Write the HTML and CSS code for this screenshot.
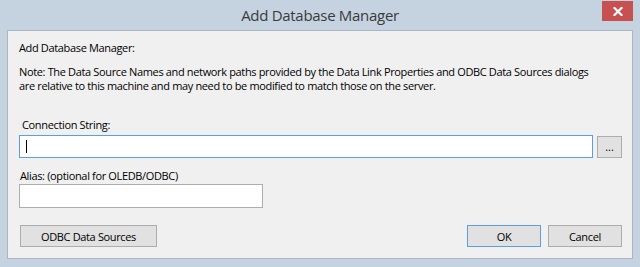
FILE: index.html
```html
<!DOCTYPE html>
<html>
<head>
<meta charset="utf-8">
<link rel="stylesheet" href="styles.css">
</head>
<body>
<div class="window">
  <div class="titlebar">
    <div class="tb-side"></div>
    <div class="title">Add Database Manager</div>
    <div class="tb-side tb-right">
      <div class="close">
        <svg width="10" height="9" viewBox="0 0 10 9"><path d="M1.5 1 L8.5 8 M8.5 1 L1.5 8" stroke="#fff" stroke-width="2.2" stroke-linecap="square"/></svg>
      </div>
    </div>
  </div>
  <div class="panel">
    <div class="heading">Add Database Manager:</div>
    <div class="note">Note: The Data Source Names and network paths provided by the Data Link Properties and ODBC Data Sources dialogs<br>are relative to this machine and may need to be modified to match those on the server.</div>
    <div class="label conn-label">Connection String:</div>
    <div class="conn-row">
      <div class="textbox focused"><span class="caret"></span></div>
      <div class="btn dots">...</div>
    </div>
    <div class="label alias-label">Alias: (optional for OLEDB/ODBC)</div>
    <div class="textbox alias"></div>
    <div class="btn-row">
      <div class="btn odbc">ODBC Data Sources</div>
      <div class="spacer"></div>
      <div class="btn ok">OK</div>
      <div class="btn cancel">Cancel</div>
    </div>
  </div>
</div>
</body>
</html>
```

FILE: styles.css
```css
* { box-sizing: border-box; }
html, body { margin: 0; padding: 0; }
body {
  width: 640px;
  height: 267px;
  background: #c5d3e1;
  font-family: "Open Sans", "Noto Sans", sans-serif;
  font-size: 11px;
  letter-spacing: -0.35px;
  color: #000;
  overflow: hidden;
}
.window {
  width: 640px;
  height: 267px;
  display: flex;
  flex-direction: column;
}
.titlebar {
  height: 30px;
  display: grid;
  grid-template-columns: 1fr auto 1fr;
}
.title {
  font-size: 15px;
  letter-spacing: -0.3px;
  color: #3a3a3a;
  line-height: 20px;
  padding-top: 5px;
}
.tb-right {
  display: flex;
  justify-content: flex-end;
  padding-right: 7px;
  padding-top: 1px;
}
.close {
  width: 31px;
  height: 20px;
  background: #c75050;
  display: flex;
  align-items: center;
  justify-content: center;
}
.close svg { display: block; }
.panel {
  margin: 0 7px 0 7px;
  height: 229px;
  background: #f0f0f0;
  border: 1px solid #a9b6c3;
  padding: 9px 10px 0 11px;
}
.heading {
  line-height: 15px;
}
.note {
  margin-top: 10px;
  line-height: 14px;
}
.label {
  line-height: 15px;
}
.conn-label {
  margin-top: 24px;
  padding-left: 3px;
}
.conn-row {
  margin-top: 3px;
  display: flex;
  gap: 4px;
  align-items: flex-start;
}
.textbox {
  background: #fff;
  border: 1px solid #abadb3;
  height: 23px;
}
.textbox.focused {
  flex: 1;
  border-color: #5a9ee6;
  padding: 4px 0 0 6px;
}
.caret {
  display: block;
  width: 1px;
  height: 13px;
  background: #000;
}
.btn {
  background: #e1e1e1;
  border: 1px solid #adadad;
  display: flex;
  align-items: center;
  justify-content: center;
  height: 22px;
  line-height: 15px;
}
.dots {
  width: 25px;
  margin-top: 1px;
  height: 22px;
  padding-bottom: 2px;
  font-size: 11px;
  letter-spacing: 0;
}
.alias-label {
  margin-top: 10px;
  padding-left: 1px;
}
.textbox.alias {
  margin-top: 1px;
  width: 244px;
  height: 24px;
}
.btn-row {
  margin-top: 17px;
  display: flex;
  gap: 7px;
}
.spacer { flex: 1; }
.odbc {
  margin-left: 1px;
  width: 137px;
}
.ok {
  width: 74px;
  border-color: #5a9ee6;
}
.cancel {
  width: 74px;
}
```
